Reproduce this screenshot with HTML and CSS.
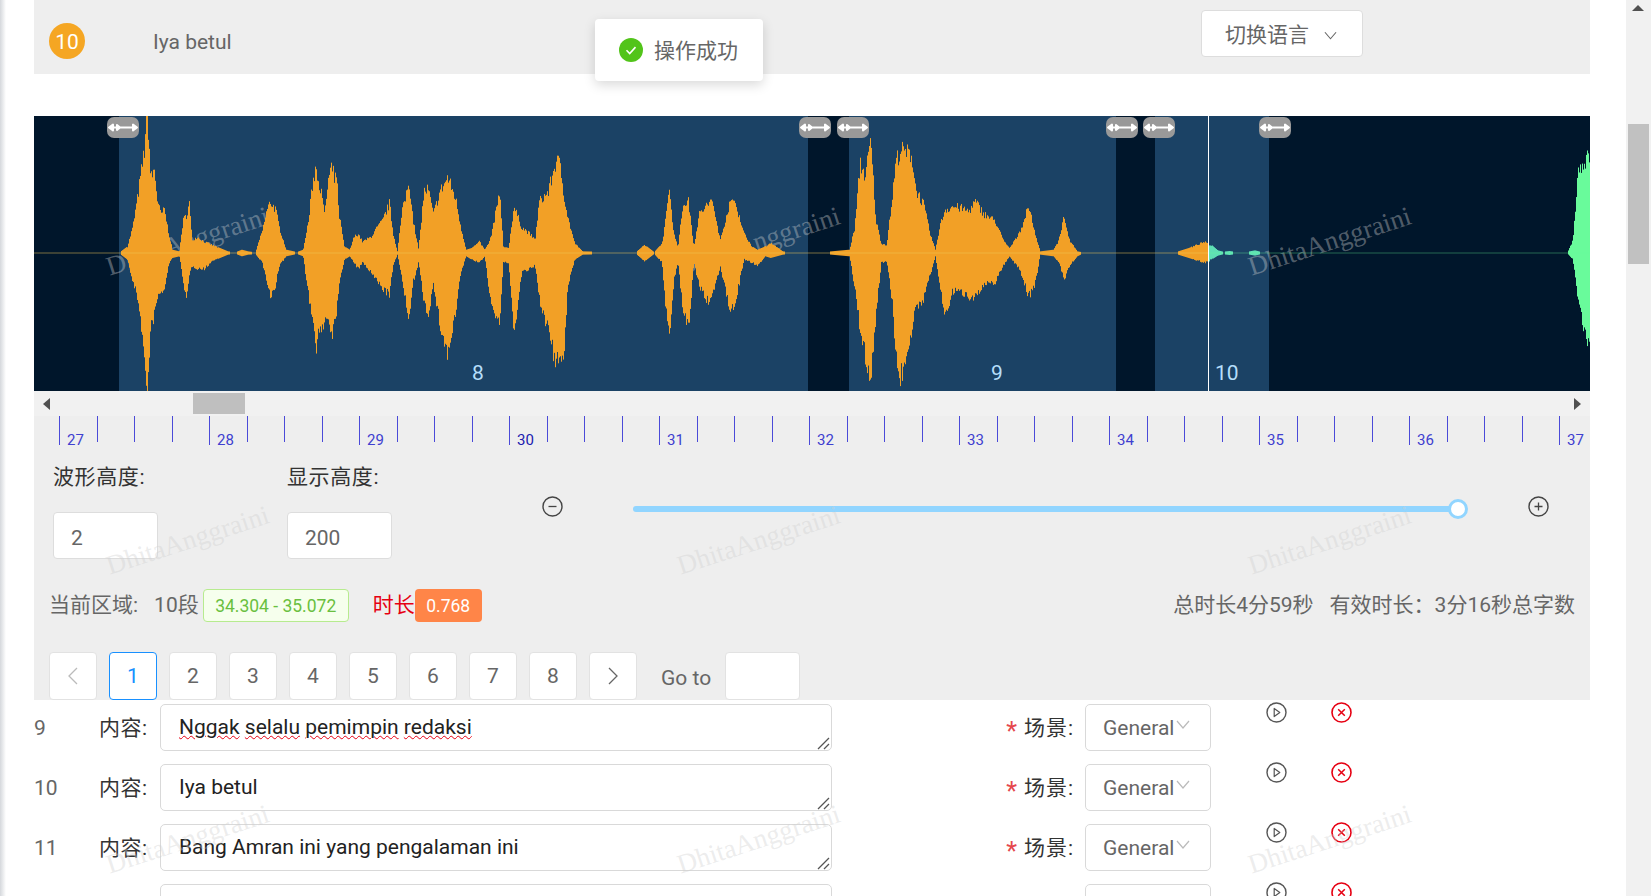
FILE: index.html
```html
<!DOCTYPE html>
<html lang="zh">
<head>
    <meta charset="UTF-8">
    <title>音频标注</title>
    <link rel="stylesheet" href="styles.css">
</head>
<body>
    <svg class="defs" width="0" height="0">
        <symbol id="drag" viewBox="0 0 32 21">
            <path d="M2 10.5H30M2 10.5l4-3v6zM30 10.5l-4-3v6zM13 10.5l-3-2.5v5z" fill="#fff" stroke="#fff" stroke-width="2" stroke-linejoin="round"/>
        </symbol>
        <symbol id="play" viewBox="0 0 21 21">
            <circle cx="10.5" cy="10.5" r="9.5" fill="none" stroke="currentColor" stroke-width="1.4"/>
            <path d="M8.2 6.4l5.6 4.1-5.6 4.1z" fill="none" stroke="currentColor" stroke-width="1.2" stroke-linejoin="round"/>
        </symbol>
        <symbol id="close" viewBox="0 0 21 21">
            <circle cx="10.5" cy="10.5" r="9.5" fill="none" stroke="currentColor" stroke-width="1.6"/>
            <path d="M7.2 7.2l6.6 6.6M13.8 7.2l-6.6 6.6" fill="none" stroke="currentColor" stroke-width="1.5"/>
        </symbol>
        <symbol id="chevron" viewBox="0 0 14 9">
            <path d="M1 1l6 7 6-7" fill="none" stroke="currentColor" stroke-width="1.2"/>
        </symbol>
        <symbol id="grip" viewBox="0 0 14 14">
            <path d="M1 13L12 2M7 13l5-5" fill="none" stroke="#555" stroke-width="1.3"/>
        </symbol>
    </svg>

    <div class="edge"></div>

    <main class="content">
        <div class="top-bar">
            <span class="badge">10</span>
            <span class="top-text">Iya betul</span>
            <div class="lang-btn">切换语言 <svg class="lang-arrow"><use href="#chevron"/></svg></div>
        </div>

        <div class="wave">
            <div class="region region-8"><span>8</span></div>
            <div class="region region-9"><span>9</span></div>
            <div class="region region-10"><span>10</span></div>
            <canvas id="waveCanvas" width="1556" height="275"></canvas>
            <div class="cursor"></div>
            <svg class="handle handle-1"><use href="#drag"/></svg>
            <svg class="handle handle-2"><use href="#drag"/></svg>
            <svg class="handle handle-3"><use href="#drag"/></svg>
            <svg class="handle handle-4"><use href="#drag"/></svg>
            <svg class="handle handle-5"><use href="#drag"/></svg>
            <svg class="handle handle-6"><use href="#drag"/></svg>
        </div>

        <div class="hscroll">
            <span class="arrow-left"></span>
            <span class="hthumb"></span>
            <span class="arrow-right"></span>
        </div>

        <div class="panel">
            <div class="ruler">
                <div class="tick major"><span>27</span></div><div class="tick"></div><div class="tick"></div><div class="tick"></div>
                <div class="tick major"><span>28</span></div><div class="tick"></div><div class="tick"></div><div class="tick"></div>
                <div class="tick major"><span>29</span></div><div class="tick"></div><div class="tick"></div><div class="tick"></div>
                <div class="tick major"><span class="now">30</span></div><div class="tick"></div><div class="tick"></div><div class="tick"></div>
                <div class="tick major"><span>31</span></div><div class="tick"></div><div class="tick"></div><div class="tick"></div>
                <div class="tick major"><span>32</span></div><div class="tick"></div><div class="tick"></div><div class="tick"></div>
                <div class="tick major"><span>33</span></div><div class="tick"></div><div class="tick"></div><div class="tick"></div>
                <div class="tick major"><span>34</span></div><div class="tick"></div><div class="tick"></div><div class="tick"></div>
                <div class="tick major"><span>35</span></div><div class="tick"></div><div class="tick"></div><div class="tick"></div>
                <div class="tick major"><span>36</span></div><div class="tick"></div><div class="tick"></div><div class="tick"></div>
                <div class="tick major"><span>37</span></div>
            </div>

            <div class="controls">
                <div class="field">
                    <div class="field-label">波形高度:</div>
                    <div class="num-input">2</div>
                </div>
                <div class="field">
                    <div class="field-label">显示高度:</div>
                    <div class="num-input">200</div>
                </div>
                <div class="zoom-row">
                    <svg class="zoom-icon" viewBox="0 0 21 21"><circle cx="10.5" cy="10.5" r="9.5" fill="none" stroke="currentColor" stroke-width="1.4"/><path d="M6.5 10.5h8" stroke="currentColor" stroke-width="1.3"/></svg>
                    <div class="slider"><span class="slider-thumb"></span></div>
                    <svg class="zoom-icon" viewBox="0 0 21 21"><circle cx="10.5" cy="10.5" r="9.5" fill="none" stroke="currentColor" stroke-width="1.4"/><path d="M6.5 10.5h8M10.5 6.5v8" stroke="currentColor" stroke-width="1.3"/></svg>
                </div>
            </div>

            <div class="info">
                <span class="info-text">当前区域:</span>
                <span class="info-text info-seg">10段</span>
                <span class="tag-green">34.304 - 35.072</span>
                <span class="info-text info-red">时长</span>
                <span class="tag-orange">0.768</span>
                <span class="info-text info-total">总时长4分59秒</span>
                <span class="info-text info-valid">有效时长：3分16秒总字数</span>
            </div>

            <div class="pager">
                <span class="page page-off"><svg class="page-arrow" viewBox="0 0 10 18"><path d="M9 1L1 9l8 8" fill="none" stroke="currentColor" stroke-width="1.3"/></svg></span>
                <span class="page active">1</span>
                <span class="page">2</span>
                <span class="page">3</span>
                <span class="page">4</span>
                <span class="page">5</span>
                <span class="page">6</span>
                <span class="page">7</span>
                <span class="page">8</span>
                <span class="page"><svg class="page-arrow" viewBox="0 0 10 18"><path d="M1 1l8 8-8 8" fill="none" stroke="currentColor" stroke-width="1.3"/></svg></span>
                <span class="goto">Go to</span>
                <span class="goto-input"></span>
            </div>
        </div>

        <div class="rows">
            <div class="row">
                <span class="row-num">9</span>
                <span class="row-label">内容:</span>
                <div class="text-box"><span class="typo">Nggak</span> <span class="typo">selalu</span> <span class="typo">pemimpin</span> <span class="typo">redaksi</span><svg class="grip"><use href="#grip"/></svg></div>
                <span class="scene"><i>*</i>场景:</span>
                <div class="select">General<svg class="select-arrow"><use href="#chevron"/></svg></div>
                <svg class="act act-play"><use href="#play"/></svg>
                <svg class="act act-close"><use href="#close"/></svg>
            </div>
            <div class="row">
                <span class="row-num">10</span>
                <span class="row-label">内容:</span>
                <div class="text-box">Iya betul<svg class="grip"><use href="#grip"/></svg></div>
                <span class="scene"><i>*</i>场景:</span>
                <div class="select">General<svg class="select-arrow"><use href="#chevron"/></svg></div>
                <svg class="act act-play"><use href="#play"/></svg>
                <svg class="act act-close"><use href="#close"/></svg>
            </div>
            <div class="row">
                <span class="row-num">11</span>
                <span class="row-label">内容:</span>
                <div class="text-box">Bang Amran ini yang pengalaman ini<svg class="grip"><use href="#grip"/></svg></div>
                <span class="scene"><i>*</i>场景:</span>
                <div class="select">General<svg class="select-arrow"><use href="#chevron"/></svg></div>
                <svg class="act act-play"><use href="#play"/></svg>
                <svg class="act act-close"><use href="#close"/></svg>
            </div>
            <div class="row">
                <span class="row-num"></span>
                <span class="row-label"></span>
                <div class="text-box"></div>
                <span class="scene"></span>
                <div class="select"></div>
                <svg class="act act-play"><use href="#play"/></svg>
                <svg class="act act-close"><use href="#close"/></svg>
            </div>
        </div>
    </main>

    <div class="scrollbar">
        <span class="scroll-up"></span>
        <span class="scroll-thumb"></span>
    </div>

    <div class="toast">
        <svg class="toast-icon" viewBox="0 0 24 24"><circle cx="12" cy="12" r="12" fill="#52c41a"/><path d="M7.5 12.3l3.2 3.2 5.8-6.4" fill="none" stroke="#fff" stroke-width="1.6"/></svg>
        <span class="toast-text">操作成功</span>
    </div>

    <div class="watermarks">
        <span>DhitaAnggraini</span><span>DhitaAnggraini</span><span>DhitaAnggraini</span>
        <span>DhitaAnggraini</span><span>DhitaAnggraini</span><span>DhitaAnggraini</span>
        <span>DhitaAnggraini</span><span>DhitaAnggraini</span><span>DhitaAnggraini</span>
    </div>

    <script src="wave.js"></script>
</body>
</html>
```

FILE: styles.css
```css
* {
    box-sizing: border-box;
}

html, body {
    height: 100%;
    margin: 0;
    overflow: hidden;
}

body {
    display: flex;
    font-family: Roboto, "Noto Sans CJK SC", sans-serif;
    font-size: 21px;
    color: #666;
    background: #fff;
    position: relative;
}

.defs {
    position: absolute;
}

.edge {
    width: 6px;
    flex: none;
    background: linear-gradient(to right, #d5d8dc, #fff);
}

.content {
    width: 1584px;
    flex: none;
    padding-left: 28px;
}

/* top bar */
.top-bar {
    height: 74px;
    background: #eee;
    display: flex;
    align-items: center;
    padding-left: 15px;
}

.badge {
    width: 36px;
    height: 36px;
    margin-top: 8px;
    padding-top: 2px;
    border-radius: 50%;
    background: #f5a623;
    color: #fff;
    display: flex;
    align-items: center;
    justify-content: center;
}

.top-text {
    margin: 10px 0 0 68px;
}

.lang-btn {
    margin: 10px 227px 0 auto;
    align-self: flex-start;
    width: 162px;
    height: 47px;
    padding: 0 0 2px 23px;
    background: #fff;
    border: 1px solid #ddd;
    border-radius: 4px;
    display: flex;
    align-items: center;
    gap: 15px;
}

.lang-arrow {
    width: 13px;
    height: 9px;
    margin-top: 5px;
}

/* waveform */
.wave {
    margin-top: 42px;
    height: 275px;
    background: #00162b;
    position: relative;
    overflow: hidden;
}

#waveCanvas {
    position: absolute;
    left: 0;
    top: 0;
    z-index: 2;
}

.region {
    position: absolute;
    top: 0;
    height: 100%;
    background: #1b4265;
    color: #b5defa;
}

.region span {
    position: absolute;
    top: 245px;
    line-height: 24px;
}

.region-8 { left: 85px; width: 689px; }
.region-8 span { left: 353px; }
.region-9 { left: 815px; width: 267px; }
.region-9 span { left: 142px; }
.region-10 { left: 1121px; width: 114px; }
.region-10 span { left: 60px; }

.cursor {
    position: absolute;
    left: 1174px;
    top: 0;
    width: 1px;
    height: 100%;
    background: #fff;
    z-index: 3;
}

.handle {
    position: absolute;
    top: 1px;
    width: 32px;
    height: 21px;
    background: #999;
    border-radius: 7px;
    z-index: 3;
}

.handle-1 { left: 73px; }
.handle-2 { left: 765px; }
.handle-3 { left: 803px; }
.handle-4 { left: 1072px; }
.handle-5 { left: 1109px; }
.handle-6 { left: 1225px; }

.hscroll {
    height: 25px;
    background: #f1f1f1;
    position: relative;
}

.hthumb {
    position: absolute;
    left: 159px;
    top: 2px;
    width: 52px;
    height: 21px;
    background: #bfbfbf;
}

.arrow-left, .arrow-right {
    position: absolute;
    top: 7px;
    border: 6px solid transparent;
    border-left-width: 0;
    border-right: 7px solid #505050;
    left: 9px;
}

.arrow-right {
    left: auto;
    right: 9px;
    border-right-width: 0;
    border-left: 7px solid #505050;
}

/* panel under the wave */
.panel {
    height: 284px;
    background: #eee;
}

.ruler {
    display: flex;
    padding-left: 25px;
    height: 29px;
}

.tick {
    width: 37.5px;
    flex: none;
    height: 26px;
    border-left: 1px solid #4a4ad8;
}

.tick.major {
    height: 29px;
    display: flex;
    align-items: flex-end;
    padding-left: 7px;
}

.tick span {
    font-size: 15px;
    line-height: 15px;
    margin-bottom: -3px;
    color: #4040d0;
}

.tick span.now {
    color: #2020b0;
}

.controls {
    display: flex;
    margin-top: 20px;
    padding-left: 19px;
    height: 94px;
}

.field {
    width: 234px;
    flex: none;
}

.field-label {
    color: #333;
    line-height: 24px;
    margin-bottom: 23px;
    letter-spacing: 0.6px;
}

.num-input {
    width: 105px;
    height: 47px;
    padding: 4px 0 0 17px;
    background: #fff;
    border: 1px solid #ddd;
    border-radius: 4px;
    display: flex;
    align-items: center;
}

.zoom-row {
    display: flex;
    align-items: center;
    gap: 70px;
    height: 22px;
    margin: 30px 0 0 21px;
    color: #444;
}

.zoom-icon {
    width: 21px;
    height: 21px;
    flex: none;
}

.slider {
    width: 825px;
    height: 6px;
    margin-top: 5px;
    background: #91d5ff;
    border-radius: 3px;
    position: relative;
}

.slider-thumb {
    position: absolute;
    right: -10px;
    top: -7px;
    width: 20px;
    height: 20px;
    border-radius: 50%;
    background: #fff;
    border: 3px solid #91d5ff;
}

.info {
    display: flex;
    align-items: center;
    height: 33px;
    margin-top: 30px;
    padding: 0 15px;
}

.info-text {
    padding-bottom: 5px;
}

.info-seg {
    margin-left: 16px;
    margin-right: 4px;
}

.tag-green, .tag-orange {
    height: 33px;
    display: flex;
    align-items: center;
    justify-content: center;
    border-radius: 4px;
    font-size: 17.5px;
}

.tag-green {
    width: 146px;
    color: #6abf40;
    background: #f6ffed;
    border: 1px solid #b7eb8f;
}

.info-red {
    color: #e60012;
    margin-left: 24px;
}

.tag-orange {
    width: 67px;
    color: #fff;
    background: #ff8548;
}

.info-total {
    margin-left: auto;
}

.info-valid {
    margin-left: 16px;
}

.pager {
    display: flex;
    gap: 12px;
    margin-top: 30px;
    padding-left: 15px;
    height: 48px;
}

.page {
    width: 48px;
    height: 48px;
    background: #fff;
    border: 1px solid #e2e2e2;
    border-radius: 4px;
    display: flex;
    align-items: center;
    justify-content: center;
}

.page.active {
    color: #1890ff;
    border-color: #1890ff;
}

.page-off {
    color: #bbb;
}

.page-arrow {
    width: 10px;
    height: 18px;
}

.goto {
    margin-left: 12px;
    margin-right: 2px;
    display: flex;
    align-items: center;
    padding-top: 4px;
}

.goto-input {
    width: 75px;
    height: 48px;
    background: #fff;
    border: 1px solid #e2e2e2;
    border-radius: 4px;
}

/* segment rows */
.rows {
    margin-top: 4px;
    display: flex;
    flex-direction: column;
    gap: 13px;
}

.row {
    display: flex;
    align-items: flex-start;
    height: 47px;
    flex: none;
}

.row-num {
    width: 66px;
    flex: none;
    line-height: 49px;
}

.row-label {
    width: 60px;
    flex: none;
    line-height: 48px;
    letter-spacing: 0.5px;
    margin-left: -1px;
    margin-right: 1px;
    color: #333;
}

.text-box {
    width: 672px;
    height: 47px;
    flex: none;
    border: 1px solid #d9d9d9;
    border-radius: 5px;
    padding-left: 18px;
    color: #222;
    line-height: 45px;
    position: relative;
}

.typo {
    text-decoration: underline wavy #e60012 1px;
}

.grip {
    position: absolute;
    right: 0;
    bottom: 0;
    width: 14px;
    height: 14px;
}

.scene {
    width: 253px;
    flex: none;
    line-height: 48px;
    letter-spacing: 1px;
    text-align: right;
    padding-right: 11px;
    color: #333;
}

.scene i {
    color: #e5484d;
    font-style: normal;
    font-size: 25px;
    line-height: 1;
    vertical-align: -5px;
    margin-right: 6px;
}

.select {
    width: 126px;
    height: 47px;
    flex: none;
    border: 1px solid #d9d9d9;
    border-radius: 5px;
    padding-left: 17px;
    display: flex;
    align-items: center;
}

.select-arrow {
    width: 14px;
    height: 9px;
    color: #bbb;
    margin: -6px 0 0 2px;
}

.act {
    width: 21px;
    height: 21px;
    flex: none;
    margin-top: -2px;
}

.act-play {
    margin-left: 55px;
    color: #555;
}

.act-close {
    margin-left: 44px;
    color: #e60012;
}

/* browser scrollbar */
.scrollbar {
    width: 25px;
    margin-left: 36px;
    flex: none;
    background: #f1f1f1;
    position: relative;
}

.scroll-up {
    position: absolute;
    left: 6px;
    top: 5px;
    border: 6px solid transparent;
    border-top-width: 0;
    border-bottom: 6px solid #505050;
}

.scroll-thumb {
    position: absolute;
    left: 2px;
    top: 124px;
    width: 21px;
    height: 140px;
    background: #c1c1c1;
}

/* floating */
.toast {
    position: absolute;
    left: 595px;
    top: 19px;
    width: 168px;
    height: 62px;
    background: #fff;
    border-radius: 4px;
    box-shadow: 0 4px 12px rgba(0, 0, 0, 0.15);
    display: flex;
    align-items: center;
    gap: 11px;
    padding-left: 24px;
}

.toast-icon {
    width: 24px;
    height: 24px;
}

.toast-text {
    padding-bottom: 2px;
}

.watermarks {
    position: absolute;
    left: -98px;
    top: 92px;
    display: grid;
    grid-template-columns: repeat(3, 571px);
    grid-auto-rows: 299px;
    place-items: center;
    pointer-events: none;
    z-index: 1;
}

.watermarks span {
    font-family: "Liberation Serif", serif;
    font-size: 27px;
    color: rgba(208, 208, 208, 0.4);
    transform: rotate(-18deg);
}
```

FILE: wave.js
```js
// peak data as [x, top, bottom], x and y are in trace units, see toPeaks
var traceA = [
    [64,758,762],[136,758,762],[140,756,764],[146,758,762],[225,758,762],[240,740,780],[250,680,850],[258,600,890],[265,520,960],[272,440,1100],[275,350,1170],[279,350,1170],[284,530,1000],[291,500,950],[297,600,900],[303,640,880],[310,625,880],[317,690,800],[325,750,775],[338,755,770],
    [345,660,840],[352,640,915],[357,605,830],[362,720,800],[372,710,808],[385,725,810],[400,735,785],[415,745,775],[430,755,765],[445,757,763],[456,750,770],[468,755,765],[482,758,764],[495,690,790],[503,630,850],[510,600,900],[520,625,860],[527,680,800],[540,750,770],
    [560,757,763],[572,750,770],[582,660,890],[590,540,980],[596,490,1050],[605,560,1000],[612,640,970],[620,530,960],[626,500,1015],[636,540,930],[640,640,850],[650,740,780],[660,750,770],[668,710,790],[676,700,810],[684,725,790],[700,710,820],[712,680,850],[722,660,870],[735,605,890],[742,700,800],[750,755,765],
    [758,640,830],[772,535,980],[780,660,850],[790,750,790],[800,570,910],[808,560,950],[818,640,860],[830,570,980],[845,525,1080],[860,590,950],[870,680,820],[880,750,770],[890,745,780],[905,725,790],[915,750,770],[925,720,900],[935,640,950],[943,560,970],[950,740,790],[960,745,790],
    [970,615,1010],[985,680,820],[1000,700,810],[1010,720,800],[1018,600,900],[1035,570,1000],[1050,470,1120],[1058,490,1060],[1063,560,1140],[1072,650,860],[1085,730,780],[1100,755,765],[1200,758,762],[1217,735,785],[1235,757,763],[1250,730,790],[1258,640,950],[1264,555,1040],[1272,700,850],[1280,740,790],
    [1290,605,950],[1300,600,1000],[1310,740,790],[1320,640,860],[1335,610,910],[1345,600,900],[1360,720,800],[1375,620,920],[1385,590,940],[1395,640,860],[1405,700,780],[1420,740,790],[1430,750,800],[1445,740,770],[1455,728,775],[1478,755,765],[1500,758,762]
];

var traceB = [
    [0,758,762],[55,750,770],[65,680,870],[75,480,1000],[85,520,1080],[95,410,1160],[105,660,950],[115,730,790],[125,735,785],[135,600,900],[142,480,1060],[150,440,1165],[165,450,1050],[172,450,1000],[180,560,940],[195,610,900],[207,700,830],[217,750,770],[225,680,860],[235,625,955],
    [250,615,880],[265,620,880],[280,630,895],[292,600,895],[310,640,860],[330,660,850],[345,720,800],[357,745,770],[375,700,810],[393,615,895],[405,700,860],[415,755,765],[440,750,770],[450,720,790],[460,645,845],[470,720,800],[485,755,770],[495,758,762],[670,758,762],[675,755,765],[695,745,775],[725,725,790],[733,735,785],
    [738,735,780],[750,752,768],[760,756,764],[772,754,766],[785,757,763],[800,758,762],[820,752,768],[835,758,762],[1410,758,762],[1420,720,780],[1430,500,910],[1440,480,1000],[1453,455,1065]
];

function toPeaks(trace, origin, scale) {
    return trace.map(function(p) {
        return [origin + p[0] / scale - 34, (760 - p[1]) / 3, (p[2] - 760) / 3];
    });
}

var peaks = toPeaks(traceA, 0, 1.889).concat(toPeaks(traceB, 820, 1.887));
var seed = 7;

function noise() {
    seed = (seed * 16807) % 2147483647;
    return seed / 2147483647;
}

function rough(v) {
    // small peaks stay smooth, the bigger ones get a rough edge
    return v > 6 ? v * (0.86 + noise() * 0.2) : v;
}

function drawWave() {
    var ctx = document.getElementById('waveCanvas').getContext('2d');
    var mid = 137;
    var i = 0;

    for (var x = 0; x < 1556; x++) {
        while (i < peaks.length - 2 && peaks[i + 1][0] < x) {
            i++;
        }
        var a = peaks[i], b = peaks[i + 1];
        var t = Math.max(0, Math.min(1, (x - a[0]) / (b[0] - a[0])));
        var top = rough(a[1] + (b[1] - a[1]) * t);
        var bot = rough(a[2] + (b[2] - a[2]) * t);

        if (x < 1174) ctx.fillStyle = '#f2a026';
        else if (x < 1500) ctx.fillStyle = '#5fe0b4';
        else ctx.fillStyle = '#69fb9b';

        if (top > 1.5 || bot > 1.5) {
            ctx.fillRect(x, mid - top, 1, top + bot);
        }
    }

    // centre line, dim
    ctx.fillStyle = 'rgba(242, 200, 90, 0.5)';
    ctx.fillRect(0, mid - 0.5, 1174, 1);
    ctx.fillStyle = 'rgba(105, 251, 155, 0.35)';
    ctx.fillRect(1175, mid - 0.5, 381, 1);
}

drawWave();
```
